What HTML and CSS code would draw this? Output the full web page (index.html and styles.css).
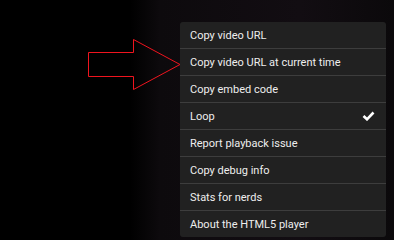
FILE: index.html
```html
<!DOCTYPE html>
<html lang="en">

<head>
  <meta charset="UTF-8">
  <title>Player context menu</title>
  <link rel="stylesheet" href="styles.css">
</head>

<body>
  <div class="player">
    <!-- hint arrow pointing at the menu item -->
    <svg class="arrow" width="100" height="60" viewBox="0 0 100 60">
      <polygon points="0.5,13.5 45.5,13.5 45.5,0.5 92,25.5 45.5,50.5 45.5,37.5 0.5,37.5" fill="none" stroke="#f0141e" stroke-width="1"/>
    </svg>

    <ul class="menu">
      <li class="item">Copy video URL</li>
      <li class="item">Copy video URL at current time</li>
      <li class="item">Copy embed code</li>
      <li class="item">Loop
        <svg class="check" width="13" height="10" viewBox="0 0 13 10">
          <path d="M1.5 5 L5 8.3 L11.5 1.5" fill="none" stroke="#fff" stroke-width="2.6"/>
        </svg>
      </li>
      <li class="item">Report playback issue</li>
      <li class="item">Copy debug info</li>
      <li class="item">Stats for nerds</li>
      <li class="item">About the HTML5 player</li>
    </ul>
  </div>
</body>

</html>
```

FILE: styles.css
```css
body {
  margin: 0;
  background: #000;
  font-family: Roboto, "Noto Sans", Arial, sans-serif;
}

.player {
  position: relative;
  width: 394px;
  height: 240px;
  overflow: hidden;
  background: linear-gradient(90deg, #000 0, #000 130px, #0d0a0d 160px, #120d12 300px, #0b090b 394px);
  padding: 22px 8px 0 180px;
  box-sizing: border-box;
}

.arrow {
  position: absolute;
  left: 88px;
  top: 39px;
}

.menu {
  list-style: none;
  margin: 0;
  padding: 0;
  width: 206px;
  background: rgba(34, 34, 34, 0.96);
  border-radius: 3px;
}

.item {
  display: flex;
  align-items: center;
  justify-content: space-between;
  height: 26px;
  padding: 0 11px 0 10px;
  color: #eee;
  font-size: 11px;
  border-bottom: 1px solid #3d3d3d;
}

.item:last-child {
  border-bottom: none;
}

.check {
  display: block;
}
```
